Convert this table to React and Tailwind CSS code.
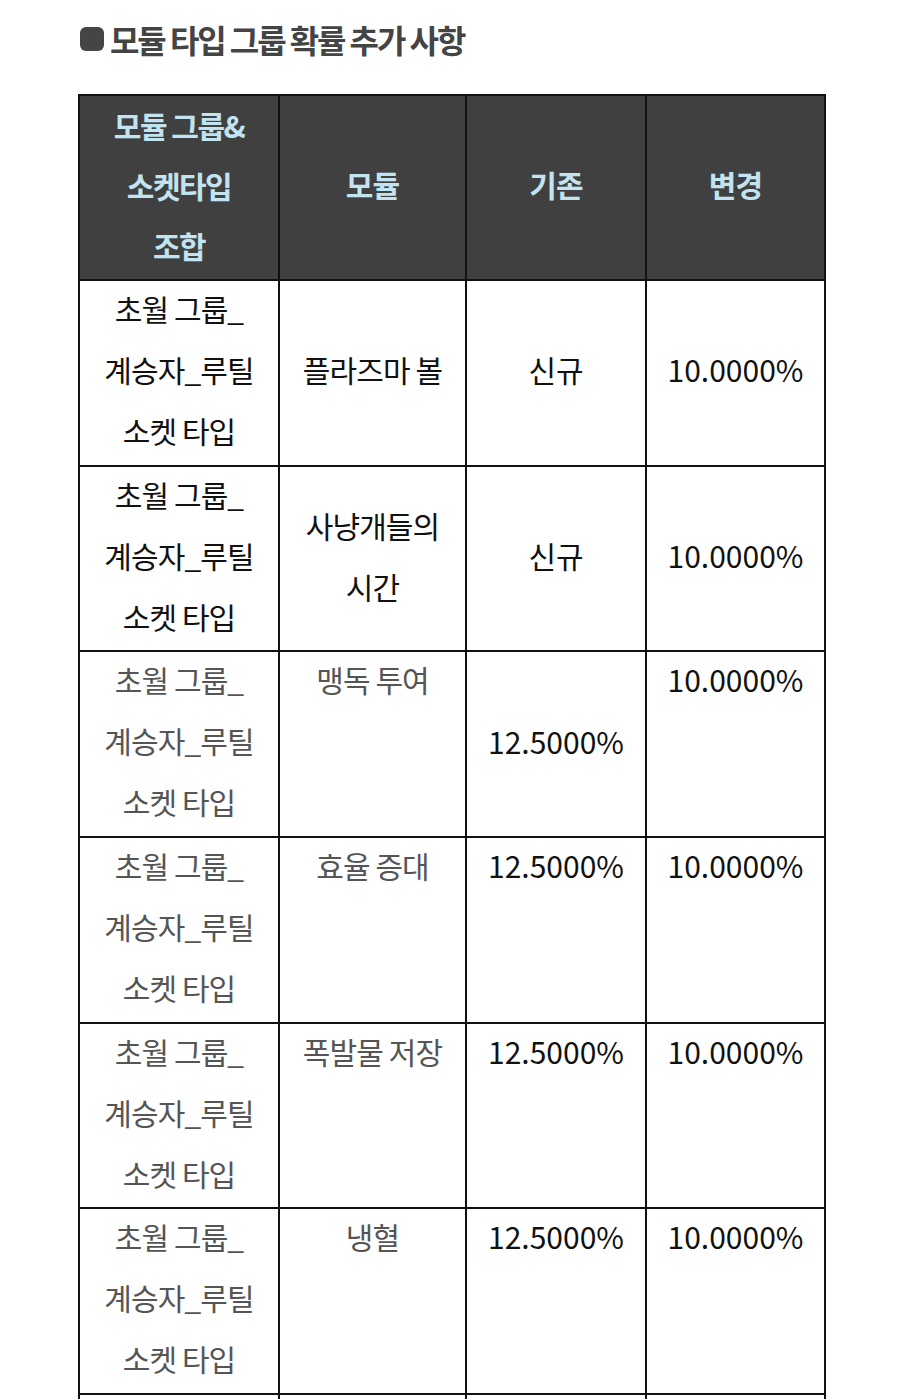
import React from "react";

const rows = [
  { mod: ["플라즈마 볼"], a: "신규", b: "10.0000%", dark: true, v: ["middle", "middle", "middle", "middle"] },
  { mod: ["사냥개들의", "시간"], a: "신규", b: "10.0000%", dark: true, v: ["middle", "middle", "middle", "middle"] },
  { mod: ["맹독 투여"], a: "12.5000%", b: "10.0000%", v: ["top", "top", "middle", "top"] },
  { mod: ["효율 증대"], a: "12.5000%", b: "10.0000%", v: ["top", "top", "top", "top"] },
  { mod: ["폭발물 저장"], a: "12.5000%", b: "10.0000%", v: ["top", "top", "top", "top"] },
  { mod: ["냉혈"], a: "12.5000%", b: "10.0000%", v: ["top", "top", "top", "top"] },
];

const va = { top: "align-top", middle: "align-middle" };

function Cell({ className, children }) {
  return (
    <td className={`border-2 border-[#111] p-0 ${className}`}>
      <div className="-translate-y-[3px]">{children}</div>
    </td>
  );
}

export default function App() {
  return (
    <div
      className="bg-white w-[900px] h-[1399px] overflow-hidden"
      style={{ fontFamily: '"Noto Sans CJK KR", "Noto Sans", sans-serif' }}
    >
      <div className="pt-[19px] pl-[80px] flex items-center gap-[6px] h-[40px] box-content">
        <div className="w-[24px] h-[24px] rounded-[6px] bg-[#454545]" />
        <h2 className="text-[32px] font-bold text-[#444] tracking-[-0.065em] leading-[40px]">
          모듈 타입 그룹 확률 추가 사항
        </h2>
      </div>
      <div className="pt-[35px] pl-[78px]">
        <table className="table-fixed border-collapse w-[746px] text-center text-[30px] leading-[61px] tracking-[-0.03em]">
          <colgroup>
            <col className="w-[200px]" />
            <col className="w-[187px]" />
            <col className="w-[180px]" />
            <col className="w-[179px]" />
          </colgroup>
          <thead>
            <tr className="h-[185px] bg-[#404040] text-[#c2e3f0] font-bold">
              <th className="border-2 border-[#111] p-0 font-bold tracking-[-0.05em]">
                <div className="-translate-y-[3px] leading-[60px]">
                  모듈 그룹&amp;
                  <br />
                  소켓타입
                  <br />
                  조합
                </div>
              </th>
              <th className="border-2 border-[#111] p-0 font-bold">
                <div className="-translate-y-[3px]">모듈</div>
              </th>
              <th className="border-2 border-[#111] p-0 font-bold">
                <div className="-translate-y-[3px]">기존</div>
              </th>
              <th className="border-2 border-[#111] p-0 font-bold">
                <div className="-translate-y-[3px]">변경</div>
              </th>
            </tr>
          </thead>
          <tbody>
            {rows.map((r, i) => {
              const kor = r.dark ? "text-[#111]" : "text-[#555]";
              return (
                <tr key={i} className="h-[185.7px]">
                  <Cell className={`${kor} ${va[r.v[0]]}`}>
                    초월 그룹_
                    <br />
                    계승자_루틸
                    <br />
                    소켓 타입
                  </Cell>
                  <Cell className={`${kor} ${va[r.v[1]]}`}>
                    {r.mod.map((m, j) => (
                      <div key={j}>{m}</div>
                    ))}
                  </Cell>
                  <Cell className={`text-[#111] tracking-[0em] ${va[r.v[2]]}`}>{r.a}</Cell>
                  <Cell className={`text-[#111] tracking-[0em] ${va[r.v[3]]}`}>{r.b}</Cell>
                </tr>
              );
            })}
            <tr className="h-[60px]">
              <td className="border-2 border-[#111] p-0" />
              <td className="border-2 border-[#111] p-0" />
              <td className="border-2 border-[#111] p-0" />
              <td className="border-2 border-[#111] p-0" />
            </tr>
          </tbody>
        </table>
      </div>
    </div>
  );
}
